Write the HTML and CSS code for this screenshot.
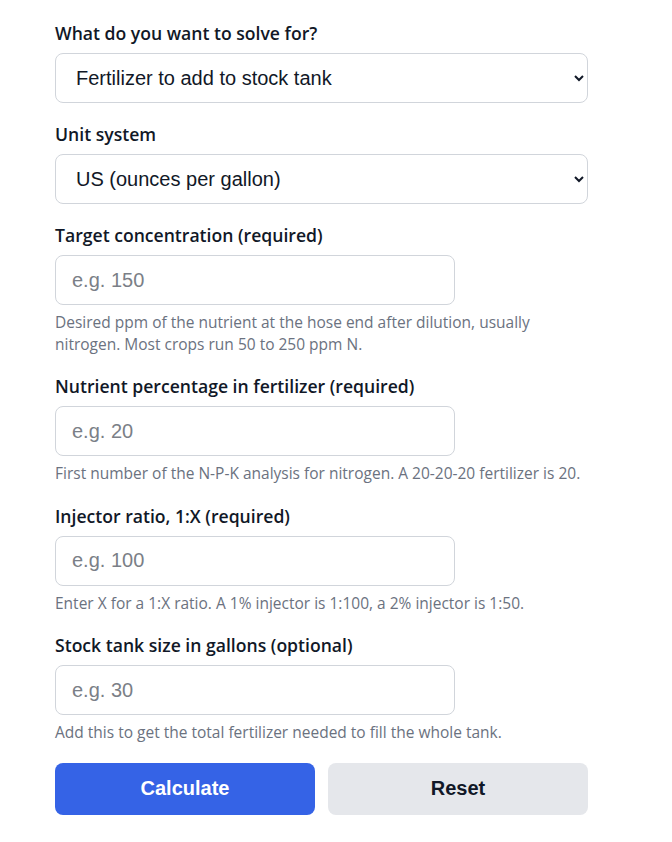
FILE: index.html
```html
<!DOCTYPE html>
<html lang="en">
<head>
<meta charset="utf-8">
<title>Fertilizer Injector Calculator</title>
<link rel="stylesheet" href="styles.css">
</head>
<body>
<form class="calc">
  <div class="field">
    <label class="label" for="solve">What do you want to solve for?</label>
    <select id="solve" class="control">
      <option>Fertilizer to add to stock tank</option>
      <option>Resulting concentration</option>
    </select>
  </div>
  <div class="field">
    <label class="label" for="units">Unit system</label>
    <select id="units" class="control">
      <option>US (ounces per gallon)</option>
      <option>Metric (grams per liter)</option>
    </select>
  </div>
  <div class="field">
    <label class="label" for="target">Target concentration (required)</label>
    <input id="target" class="control input" type="text" placeholder="e.g. 150">
    <p class="help">Desired ppm of the nutrient at the hose end after dilution, usually nitrogen. Most crops run 50 to 250 ppm N.</p>
  </div>
  <div class="field">
    <label class="label" for="pct">Nutrient percentage in fertilizer (required)</label>
    <input id="pct" class="control input" type="text" placeholder="e.g. 20">
    <p class="help">First number of the N-P-K analysis for nitrogen. A 20-20-20 fertilizer is 20.</p>
  </div>
  <div class="field">
    <label class="label" for="ratio">Injector ratio, 1:X (required)</label>
    <input id="ratio" class="control input" type="text" placeholder="e.g. 100">
    <p class="help">Enter X for a 1:X ratio. A 1% injector is 1:100, a 2% injector is 1:50.</p>
  </div>
  <div class="field">
    <label class="label" for="tank">Stock tank size in gallons (optional)</label>
    <input id="tank" class="control input" type="text" placeholder="e.g. 30">
    <p class="help">Add this to get the total fertilizer needed to fill the whole tank.</p>
  </div>
  <div class="actions">
    <button type="button" class="btn btn-primary">Calculate</button>
    <button type="reset" class="btn btn-secondary">Reset</button>
  </div>
</form>
</body>
</html>
```

FILE: styles.css
```css
* { box-sizing: border-box; }

html, body {
  margin: 0;
  background: #ffffff;
}

body {
  font-family: "Open Sans", "Noto Sans", "DejaVu Sans", sans-serif;
  color: #111827;
}

.calc {
  width: 533px;
  margin: 0 0 0 55px;
  padding-top: 21px;
  display: flex;
  flex-direction: column;
  gap: 19px;
}

.field {
  display: flex;
  flex-direction: column;
  align-items: flex-start;
}

.label {
  font-size: 17.6px;
  font-weight: 600;
  line-height: 24px;
  margin-bottom: 8px;
  color: #111827;
}

.control {
  width: 100%;
  height: 50px;
  border: 1px solid #d1d5db;
  border-radius: 8px;
  background: #ffffff;
  font-family: "Liberation Sans", Arial, sans-serif;
  font-size: 20px;
  color: #111827;
  padding: 0 16px;
  margin: 0;
}

.input {
  width: 400px;
}

.input::placeholder {
  color: #7b7f87;
}

.help {
  margin: 7px 0 0;
  font-size: 15.5px;
  line-height: 21.5px;
  color: #6b7280;
}

.actions {
  display: grid;
  grid-template-columns: 1fr 1fr;
  gap: 13px;
}

.btn {
  height: 52px;
  border: none;
  border-radius: 8px;
  font-family: "Liberation Sans", Arial, sans-serif;
  font-size: 20px;
  font-weight: 700;
  cursor: pointer;
}

.btn-primary {
  background: #3563e6;
  color: #ffffff;
}

.btn-secondary {
  background: #e5e7eb;
  color: #111827;
}
```
